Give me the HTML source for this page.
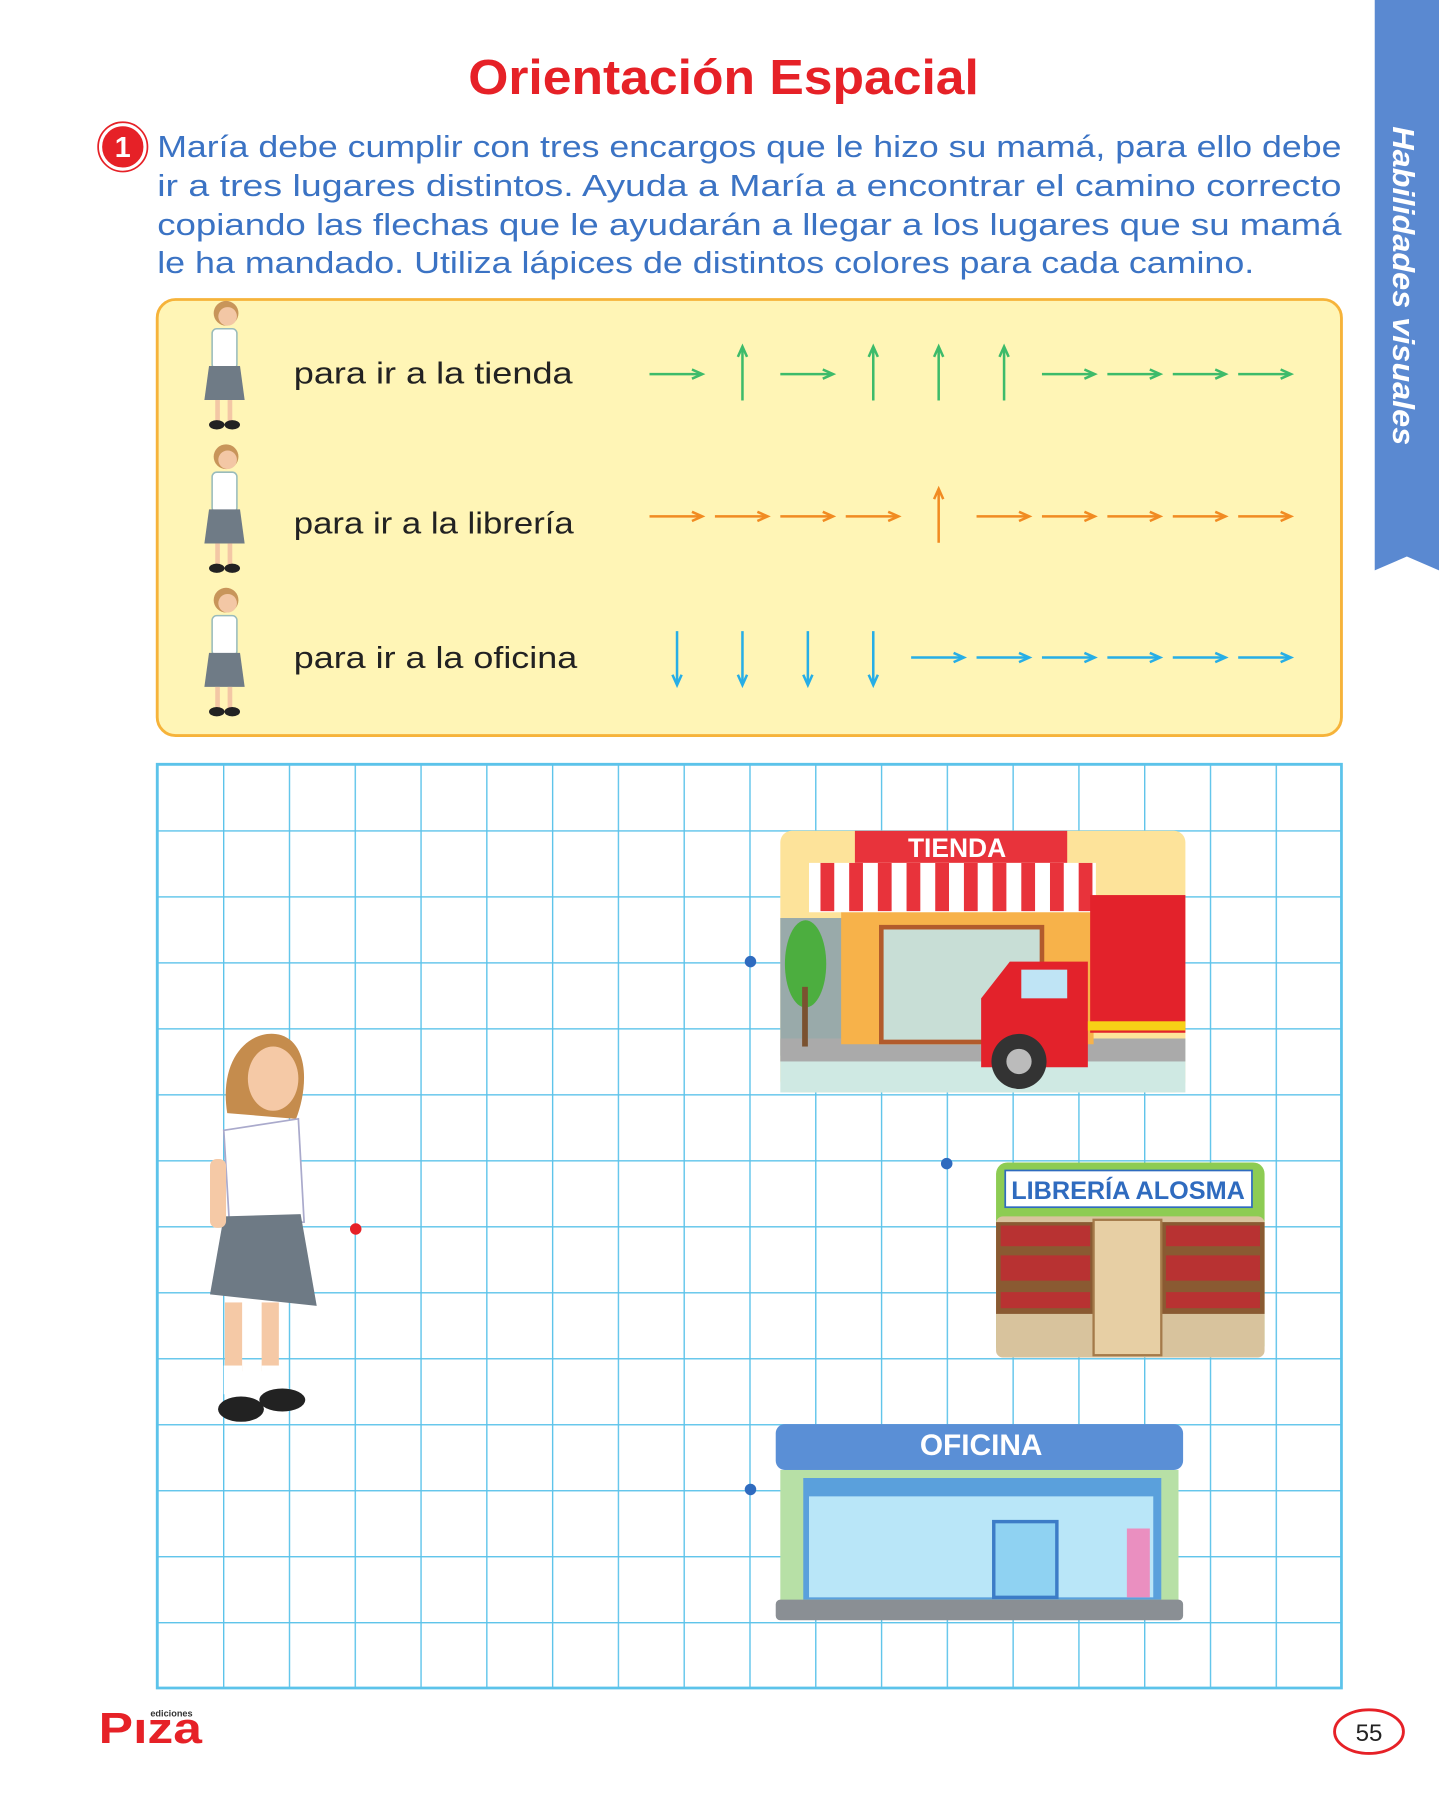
<!DOCTYPE html>
<html><head><meta charset="utf-8"><style>html,body{margin:0;padding:0;background:#fff}svg{display:block}</style></head><body>
<svg width="1439" height="1800" viewBox="0 0 1254 1568.6" xmlns="http://www.w3.org/2000/svg" font-family="Liberation Sans, sans-serif">
<defs>
<g id="ra" fill="none" stroke="currentColor" stroke-width="2.2"><line x1="0" y1="0" x2="45" y2="0"/><path d="M37,-4 L46,0 L37,4"/></g>
<g id="ua" fill="none" stroke="currentColor" stroke-width="2.2"><line x1="0" y1="23" x2="0" y2="-23"/><path d="M-4,-15 L0,-24 L4,-15"/></g>
<g id="da" fill="none" stroke="currentColor" stroke-width="2.2"><line x1="0" y1="-23" x2="0" y2="23"/><path d="M-4,15 L0,24 L4,15"/></g>
<pattern id="grid" x="137" y="666" width="57.33" height="57.5" patternUnits="userSpaceOnUse"><path d="M0,0 H57.33 M0,0 V57.5" stroke="#5cc3ea" stroke-width="2.4" fill="none"/></pattern>
<g id="mini">
<circle cx="0" cy="-40" r="8" fill="#c8955a"/><circle cx="1" cy="-38" r="6" fill="#f3c7a5"/>
<rect x="-9" y="-30" width="16" height="26" rx="3" fill="#fff" stroke="#9bb" stroke-width="1"/>
<path d="M-11,-6 L9,-6 L12,16 L-14,16Z" fill="#6f7b86"/>
<rect x="-7" y="16" width="3" height="14" fill="#f3c7a5"/><rect x="1" y="16" width="3" height="14" fill="#f3c7a5"/>
<ellipse cx="-6" cy="32" rx="5" ry="3" fill="#222"/><ellipse cx="4" cy="32" rx="5" ry="3" fill="#222"/>
</g>
</defs>
<path d="M1198,0 H1254 V497 L1226,485 L1198,497Z" fill="#5a89d1"/>
<text transform="translate(1214,110) rotate(90)" fill="#fff" font-size="27" font-weight="bold" font-style="italic" textLength="278" lengthAdjust="spacingAndGlyphs">Habilidades visuales</text>
<text x="408" y="82" fill="#e62127" font-size="43" font-weight="bold" textLength="445" lengthAdjust="spacingAndGlyphs">Orientación Espacial</text>
<circle cx="107" cy="128" r="19" fill="#e62127" stroke="#fff" stroke-width="2"/><circle cx="107" cy="128" r="21.5" fill="none" stroke="#e62127" stroke-width="1.5"/>
<text x="107" y="137" text-anchor="middle" fill="#fff" font-size="25" font-weight="bold">1</text>
<g fill="#3b73c4" font-size="27">
<text x="137" y="137" textLength="1032" lengthAdjust="spacingAndGlyphs">María debe cumplir con tres encargos que le hizo su mamá, para ello debe</text>
<text x="137" y="171" textLength="1032" lengthAdjust="spacingAndGlyphs">ir  a  tres  lugares  distintos.  Ayuda  a  María a encontrar el camino correcto</text>
<text x="137" y="205" textLength="1032" lengthAdjust="spacingAndGlyphs">copiando  las  flechas  que le ayudarán a  llegar a los lugares que su mamá</text>
<text x="137" y="238" textLength="956" lengthAdjust="spacingAndGlyphs">le ha mandado. Utiliza lápices de distintos colores para cada camino.</text>
</g>
<rect x="137" y="261" width="1032" height="380" rx="16" fill="#fff5b6" stroke="#f6b33a" stroke-width="2.5"/>
<use href="#mini" transform="translate(197,327) scale(1.35)"/><use href="#mini" transform="translate(197,452) scale(1.35)"/><use href="#mini" transform="translate(197,577) scale(1.35)"/>
<g fill="#222" font-size="27">
<text x="256" y="334" textLength="243" lengthAdjust="spacingAndGlyphs">para ir a la tienda</text>
<text x="256" y="465" textLength="244" lengthAdjust="spacingAndGlyphs">para ir a la librería</text>
<text x="256" y="582" textLength="247" lengthAdjust="spacingAndGlyphs">para ir a la oficina</text>
</g>
<g color="#3dbb6a">
<use href="#ra" x="566" y="326"/><use href="#ua" x="647" y="326"/><use href="#ra" x="680" y="326"/><use href="#ua" x="761" y="326"/><use href="#ua" x="818" y="326"/><use href="#ua" x="875" y="326"/><use href="#ra" x="908" y="326"/><use href="#ra" x="965" y="326"/><use href="#ra" x="1022" y="326"/><use href="#ra" x="1079" y="326"/>
</g>
<g color="#f18b22">
<use href="#ra" x="566" y="450"/><use href="#ra" x="623" y="450"/><use href="#ra" x="680" y="450"/><use href="#ra" x="737" y="450"/><use href="#ua" x="818" y="450"/><use href="#ra" x="851" y="450"/><use href="#ra" x="908" y="450"/><use href="#ra" x="965" y="450"/><use href="#ra" x="1022" y="450"/><use href="#ra" x="1079" y="450"/>
</g>
<g color="#27aee6">
<use href="#da" x="590" y="573"/><use href="#da" x="647" y="573"/><use href="#da" x="704" y="573"/><use href="#da" x="761" y="573"/><use href="#ra" x="794" y="573"/><use href="#ra" x="851" y="573"/><use href="#ra" x="908" y="573"/><use href="#ra" x="965" y="573"/><use href="#ra" x="1022" y="573"/><use href="#ra" x="1079" y="573"/>
</g>
<rect x="137" y="666" width="1032" height="805" fill="url(#grid)"/>
<rect x="137" y="666" width="1032" height="805" fill="none" stroke="#5cc3ea" stroke-width="2.4"/>
<g>
<rect x="680" y="724" width="353" height="228" rx="10" fill="#fde39a"/>
<rect x="680" y="800" width="60" height="120" fill="#9aa"/>
<rect x="680" y="905" width="353" height="47" fill="#cfe9e3"/>
<rect x="680" y="905" width="353" height="20" fill="#aaa"/>
<rect x="733" y="790" width="220" height="120" fill="#f7b24a"/>
<rect x="768" y="808" width="140" height="100" fill="#c8ded6" stroke="#b25b2c" stroke-width="4"/>
<rect x="745" y="724" width="185" height="28" fill="#e8333b"/>
<text x="834" y="747" text-anchor="middle" fill="#fff" font-size="23" font-weight="bold">TIENDA</text>
<path d="M705,752 H955 L955,795 H705Z" fill="#fff"/>
<g fill="#e8333b"><rect x="715" y="752" width="12" height="42"/><rect x="740" y="752" width="12" height="42"/><rect x="765" y="752" width="12" height="42"/><rect x="790" y="752" width="12" height="42"/><rect x="815" y="752" width="12" height="42"/><rect x="840" y="752" width="12" height="42"/><rect x="865" y="752" width="12" height="42"/><rect x="890" y="752" width="12" height="42"/><rect x="915" y="752" width="12" height="42"/><rect x="940" y="752" width="12" height="42"/></g>
<ellipse cx="702" cy="840" rx="18" ry="38" fill="#4cae3f"/><rect x="699" y="860" width="5" height="52" fill="#7a5230"/>
<rect x="950" y="780" width="83" height="120" fill="#e3222b"/>
<path d="M855,920 V870 L880,838 H948 V930 H855Z" fill="#e3222b"/>
<rect x="890" y="845" width="40" height="25" fill="#bfe4f5"/>
<rect x="948" y="890" width="85" height="8" fill="#f7d116"/>
<circle cx="888" cy="925" r="24" fill="#333"/><circle cx="888" cy="925" r="11" fill="#bbb"/>
</g>
<g>
<rect x="868" y="1013" width="234" height="170" rx="10" fill="#8dcc53"/>
<rect x="868" y="1060" width="234" height="123" rx="6" fill="#d8c39d"/>
<rect x="876" y="1020" width="215" height="32" fill="#fff" stroke="#2f6bbf" stroke-width="1.5"/>
<text x="983" y="1045" text-anchor="middle" fill="#2f6bbf" font-size="22" font-weight="bold">LIBRERÍA ALOSMA</text>
<rect x="868" y="1065" width="85" height="80" fill="#8a5a32"/><rect x="1012" y="1065" width="90" height="80" fill="#8a5a32"/>
<g fill="#c23" opacity=".7"><rect x="872" y="1068" width="78" height="18"/><rect x="872" y="1094" width="78" height="22"/><rect x="872" y="1126" width="78" height="14"/><rect x="1016" y="1068" width="82" height="18"/><rect x="1016" y="1094" width="82" height="22"/><rect x="1016" y="1126" width="82" height="14"/></g>
<rect x="953" y="1063" width="59" height="118" fill="#e7cfa4" stroke="#a47a4a" stroke-width="2"/>
</g>
<g>
<rect x="676" y="1241" width="355" height="40" rx="8" fill="#5a8fd6"/>
<text x="855" y="1268" text-anchor="middle" fill="#fff" font-size="26" font-weight="bold">OFICINA</text>
<rect x="680" y="1281" width="347" height="115" fill="#b7e0a6"/>
<rect x="700" y="1288" width="312" height="106" fill="#5aa0dc"/>
<rect x="705" y="1304" width="300" height="88" fill="#b9e6f8"/>
<rect x="866" y="1326" width="55" height="66" fill="#8fd2f2" stroke="#3c7cc7" stroke-width="3"/>
<rect x="982" y="1332" width="20" height="60" fill="#ea8fc0"/>
<rect x="676" y="1394" width="355" height="18" rx="4" fill="#8a8f94"/>
</g>
<circle cx="310" cy="1071" r="5" fill="#e62127"/>
<circle cx="654" cy="838" r="5" fill="#2f6bbf"/><circle cx="825" cy="1014" r="5" fill="#2f6bbf"/><circle cx="654" cy="1298" r="5" fill="#2f6bbf"/>
<g>
<path d="M198,970 C190,920 220,895 245,902 C270,910 268,950 258,975 Z" fill="#c58c4d"/>
<ellipse cx="238" cy="940" rx="22" ry="28" fill="#f5c9a6"/>
<path d="M195,985 L260,975 L265,1065 L200,1068Z" fill="#fff" stroke="#aac" stroke-width="1.5"/>
<path d="M195,1060 L262,1058 L276,1138 L183,1128Z" fill="#6e7a85"/>
<rect x="196" y="1135" width="15" height="60" fill="#f5c9a6"/><rect x="228" y="1135" width="15" height="60" fill="#f5c9a6"/>
<rect x="195" y="1190" width="16" height="25" fill="#fff"/><rect x="228" y="1190" width="16" height="22" fill="#fff"/>
<ellipse cx="210" cy="1228" rx="20" ry="11" fill="#222"/><ellipse cx="246" cy="1220" rx="20" ry="10" fill="#222"/>
<rect x="183" y="1010" width="14" height="60" rx="6" fill="#f5c9a6"/>
</g>
<text x="86" y="1519" fill="#e62127" font-size="38" font-weight="bold" textLength="90" lengthAdjust="spacingAndGlyphs">Pıza</text>
<text x="131" y="1496" fill="#333" font-size="8" font-weight="bold">ediciones</text>
<ellipse cx="1193" cy="1509" rx="30" ry="19" fill="#fff" stroke="#e62127" stroke-width="2.5"/>
<text x="1193" y="1517" text-anchor="middle" fill="#222" font-size="21">55</text>
</svg>
</body></html>
